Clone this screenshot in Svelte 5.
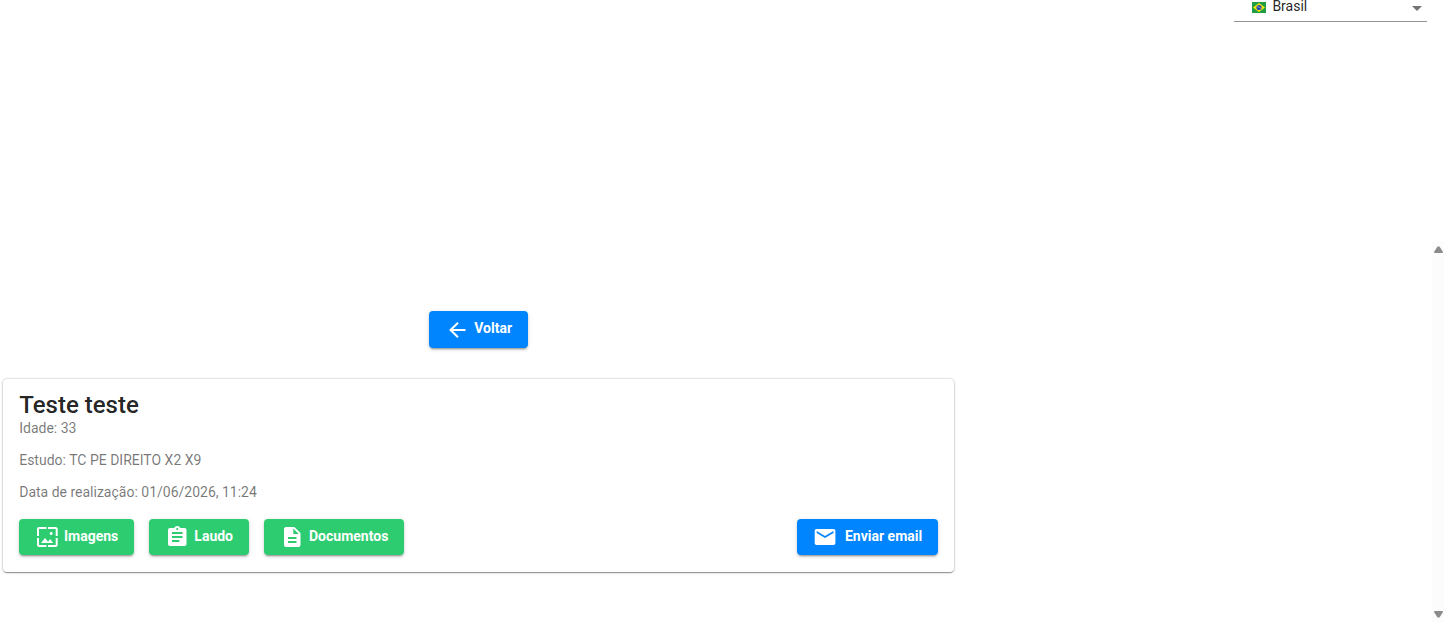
<script>
  const country = 'Brasil';
  const lines = ['Idade: 33', 'Estudo: TC PE DIREITO X2 X9', 'Data de realização: 01/06/2026, 11:24'];
  const icons = {
    back: 'M20.500 11H8.100l5.600-5.590L12.300 4l-8.200 8 8.200 8 1.410-1.410L8.100 13h12.400v-2z',
    image: 'M4 4h7.500V2H4c-1.100 0-2 .9-2 2v7h2V4zm6 9l-4 5h12.300l-3.200-4-2.030 2.710L10 13zm7.700-4.500c0-.83-.67-1.500-1.500-1.500s-1.500.67-1.500 1.500.67 1.500 1.500 1.500 1.500-.67 1.500-1.500zM20.700 2H13v2h7.700v7h2V4c0-1.100-.9-2-2-2zm0 18H13v2h7.700c1.100 0 2-.9 2-2v-7h-2v7zM4 13H2v7c0 1.100.9 2 2 2h7.500v-2H4v-7z',
    report: 'M19.500 3h-4.180C14.900 1.840 13.600 1 12.300 1c-1.300 0-2.600.84-3 2H5c-1.100 0-2 .9-2 2v14c0 1.100.9 2 2 2h14.500c1.100 0 2-.9 2-2V5c0-1.100-.9-2-2-2zm-7.200 0c.55 0 1 .45 1 1s-.45 1-1 1-1-.45-1-1 .45-1 1-1zm2 14H7v-2h7.300v2zm3.200-4H7v-2h10.500v2zm0-4H7V7h10.500v2z',
    doc: 'M14.300 2H6c-1.100 0-2 .9-2 2v16c0 1.100.89 2 2 2h12.500c1.100 0 2-.9 2-2V8l-6.200-6zm2.200 16H8v-2h8.500v2zm0-4H8v-2h8.500v2zm-3.200-5V3.500L18.800 9h-5.500z',
    mail: 'M20.500 4H3.500c-1.100 0-1.800.9-1.800 2v12c0 1.100.7 2 1.800 2h17c1.100 0 1.900-.9 1.900-2V6c0-1.100-.8-2-1.900-2zm0 4L12 13 3.700 8V6l8.300 5 8.500-5v2z'
  };
  const actions = [
    { label: 'Imagens', icon: icons.image },
    { label: 'Laudo', icon: icons.report },
    { label: 'Documentos', icon: icons.doc }
  ];
</script>

{#snippet glyph(d)}
  <svg class="icon" viewBox="0 0 24 24" aria-hidden="true"><path {d} /></svg>
{/snippet}

<div class="page">
  <header>
    <div class="select">
      <svg class="flag" viewBox="0 0 14 11" aria-hidden="true">
        <rect width="14" height="11" fill="#229e45" />
        <path d="M7 .9L13 5.500 7 10.100 1 5.500z" fill="#f8e509" />
        <circle cx="7" cy="5.500" r="2.600" fill="#2b49a3" />
        <path d="M4.900 4.700q2.500 0 4.200 1.800" fill="none" stroke="#dce8ef" stroke-width=".5" />
      </svg>
      <span>{country}</span>
      <i class="caret"></i>
    </div>
  </header>

  <div class="body">
    <main>
      <button class="btn blue back">{@render glyph(icons.back)}<span>Voltar</span></button>
      <section class="card">
        <h1>Teste teste</h1>
        {#each lines as line}
          <p>{line}</p>
        {/each}
        <div class="actions">
          {#each actions as action}
            <button class="btn green">{@render glyph(action.icon)}<span>{action.label}</span></button>
          {/each}
          <button class="btn blue mail">{@render glyph(icons.mail)}<span>Enviar email</span></button>
        </div>
      </section>
    </main>
    <div class="scrollbar">
      <svg width="10" height="8" viewBox="-.5 0 10 8"><path d="M4 .5h2L9.500 6q0 1-1 1h-7q-1 0-1-1z" /></svg>
      <svg width="10" height="8" viewBox="-.5 0 10 8"><path d="M4 7.500h2L9.500 2q0-1-1-1h-7q-1 0-1 1z" /></svg>
    </div>
  </div>
</div>

<style>
  .page {
    height: 622px;
    overflow: hidden;
    display: flex;
    flex-direction: column;
    background: #fff;
    font-family: Roboto, sans-serif;
    font-size: 14px;
    color: rgba(0, 0, 0, 0.87);
  }
  header {
    height: 241px;
    display: flex;
    justify-content: flex-end;
    align-items: flex-start;
    padding-right: 17px;
    box-sizing: border-box;
  }
  .select {
    width: 193px;
    height: 22px;
    box-sizing: border-box;
    display: flex;
    align-items: flex-start;
    padding: 0 5px 0 18px;
    border-bottom: 1px solid #949494;
  }
  .select span {
    flex: 1;
    margin-left: 6.4px;
    line-height: 12px;
  }
  .flag {
    width: 14px;
    height: 11px;
    margin-top: 2px;
  }
  .caret {
    border: 5px solid transparent;
    border-top-color: #757575;
    border-bottom: 0;
    margin-top: 6px;
  }
  .body {
    flex: 1;
    display: flex;
    justify-content: space-between;
  }
  main {
    width: 951px;
    padding: 70px 0 0 3.2px;
    display: flex;
    flex-direction: column;
    align-items: center;
  }
  .btn {
    display: flex;
    align-items: center;
    gap: 5px;
    height: 36px;
    padding: 0 16px;
    border: 0;
    border-radius: 4px;
    color: #fff;
    font: 700 14px/20px Roboto, sans-serif;
    white-space: nowrap;
    box-shadow: 0 3px 1px -2px rgba(0, 0, 0, 0.2), 0 2px 2px 0 rgba(0, 0, 0, 0.14), 0 1px 5px 0 rgba(0, 0, 0, 0.12);
  }
  .btn span {
    margin-top: -2px;
  }
  .blue {
    background: #0085ff;
  }
  .green {
    background: #2ecc71;
  }
  .back {
    height: 37px;
  }
  .back span {
    margin-top: -3px;
  }
  .mail {
    margin-left: auto;
    gap: 8px;
  }
  .icon {
    width: 24px;
    height: 24px;
    fill: currentColor;
  }
  .card {
    width: 951px;
    height: 193px;
    margin-top: 31px;
    padding: 10px 16px 16px;
    box-sizing: border-box;
    border-radius: 4px;
    background: #fff;
    box-shadow: 0 2px 1px -1px rgba(0, 0, 0, 0.2), 0 1px 1px 0 rgba(0, 0, 0, 0.14), 0 1px 3px 0 rgba(0, 0, 0, 0.12), 0 0 1px 1px rgba(0, 0, 0, 0.1);
  }
  h1 {
    margin: 0 0 -1px;
    font-size: 24px;
    line-height: 32px;
    font-weight: 500;
  }
  p {
    margin: 0 0 16px;
    line-height: 16px;
    color: rgba(0, 0, 0, 0.54);
  }
  .actions {
    display: flex;
    gap: 15px;
    margin: 19px 0 0 -0.2px;
  }
  .scrollbar {
    width: 12px;
    box-sizing: border-box;
    display: flex;
    flex-direction: column;
    justify-content: space-between;
    align-items: flex-end;
    padding: 5px 1px 4px 0;
    background: #fcfcfc;
  }
  .scrollbar path {
    fill: #8b8b8b;
  }
</style>
